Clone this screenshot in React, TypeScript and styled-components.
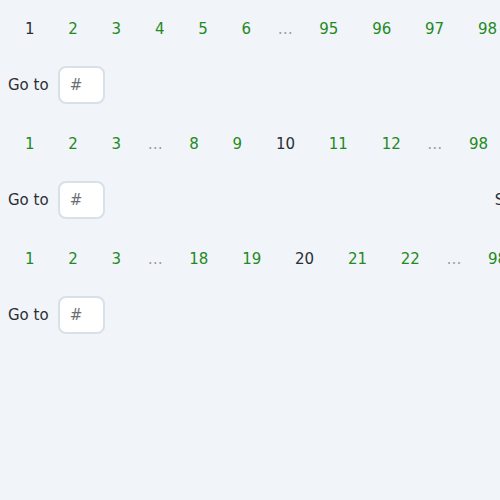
import React from "react";
import styled, { createGlobalStyle } from "styled-components";

const Global = createGlobalStyle`
  html, body {
    margin: 0;
    padding: 0;
    background: #f1f4f8;
    overflow: hidden;
  }
  body {
    font-family: "DejaVu Sans", sans-serif;
    font-size: 15px;
    color: #2b2f33;
  }
  #root {
    width: 500px;
    overflow: visible;
  }
`;

const Page = styled.main`
  padding: 9px 0 8px 8px;
  min-height: 483px;
  background: #f1f4f8;
`;

const Block = styled.section`
  display: flex;
  flex-direction: column;
  gap: 17px;
  margin-bottom: 20px;
`;

const Nav = styled.nav`
  display: flex;
  flex-wrap: nowrap;
  align-items: center;
  height: 40px;
  white-space: nowrap;
`;

const PageItem = styled.a<{ $current?: boolean }>`
  display: inline-flex;
  align-items: center;
  justify-content: center;
  height: 40px;
  padding: 0 16.9px;
  flex: none;
  color: ${(p) => (p.$current ? "#2b2f33" : "#1f8a1f")};
  text-decoration: none;
  cursor: pointer;
`;

const Ellipsis = styled.span`
  display: inline-flex;
  align-items: center;
  justify-content: center;
  width: 34.4px;
  height: 40px;
  flex: none;
  color: #9aa0a6;
`;

const GoRow = styled.div`
  display: flex;
  align-items: center;
  gap: 9px;
  white-space: nowrap;
`;

const Label = styled.label`
  flex: none;
  color: #2b2f33;
`;

const Input = styled.input`
  flex: none;
  box-sizing: border-box;
  width: 47px;
  height: 38px;
  padding: 0 10px;
  border: 2px solid #d8e0e8;
  border-radius: 8px;
  background: #ffffff;
  font-family: "DejaVu Sans", sans-serif;
  font-size: 15px;
  color: #2b2f33;
  outline: none;
  &::placeholder { color: #6b6f73; }
`;

const Summary = styled.span`
  flex: none;
  margin-left: 381px;
  color: #2b2f33;
`;

type Entry = number | "…";

const rows: { items: Entry[]; current: number; summary?: boolean }[] = [
  { items: [1, 2, 3, 4, 5, 6, "…", 95, 96, 97, 98, 99, 100], current: 1 },
  { items: [1, 2, 3, "…", 8, 9, 10, 11, 12, "…", 98, 99, 100], current: 10, summary: true },
  { items: [1, 2, 3, "…", 18, 19, 20, 21, 22, "…", 98, 99, 100], current: 20 },
];

export default function App() {
  return (
    <Page>
      <Global />
      {rows.map((row, ri) => (
        <Block key={ri}>
          <Nav>
            {row.items.map((it, i) =>
              it === "…" ? (
                <Ellipsis key={i}>…</Ellipsis>
              ) : (
                <PageItem key={i} $current={it === row.current}>
                  {it}
                </PageItem>
              )
            )}
          </Nav>
          <GoRow>
            <Label>Go to</Label>
            <Input placeholder="#" />
            {row.summary && <Summary>Showing page 10 of 98</Summary>}
          </GoRow>
        </Block>
      ))}
    </Page>
  );
}
